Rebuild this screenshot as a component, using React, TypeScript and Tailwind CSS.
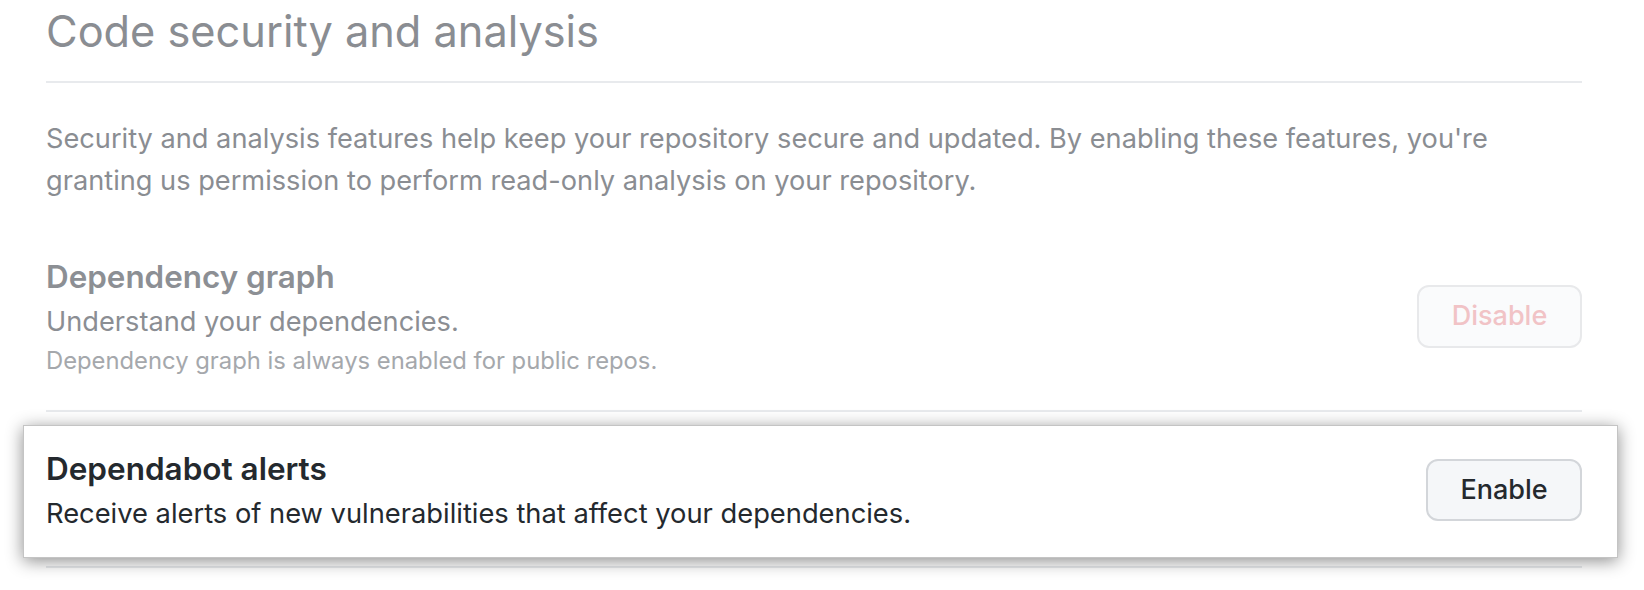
export default function App() {
  return (
    <div className="w-full h-[590px] overflow-hidden bg-white font-['Inter',sans-serif] antialiased">
      <div className="pl-[46px] pr-[62px]">
        <div className="pt-[3px] pb-[22px] border-b-2 border-[#e8eaed]">
          <h2 className="text-[43.3px] leading-[56px] font-normal text-[#8a8d92]">Code security and analysis</h2>
        </div>

        <p className="mt-[35px] text-[27.2px] leading-[42px] text-[#8a8d92]">
          Security and analysis features help keep your repository secure and updated. By enabling these features, you're
          <br />
          granting us permission to perform read-only analysis on your repository.
        </p>

        <div className="mt-[51px] pb-[31px] flex items-center justify-between border-b-2 border-[#e8eaed]">
          <div>
            <h3 className="text-[31.4px] leading-[48px] font-semibold text-[#8c8f94]">Dependency graph</h3>
            <p className="text-[27.2px] leading-[42px] text-[#8b8e93]">Understand your dependencies.</p>
            <p className="text-[23.8px] leading-[36px] text-[#a5a8ac]">Dependency graph is always enabled for public repos.</p>
          </div>
          <button className="w-[165px] h-[63px] rounded-[12px] border-2 border-[#e8e9eb] bg-[#fafbfc] text-[27px] font-medium text-[#f1c3c6]">
            Disable
          </button>
        </div>

        <div className="pt-[13px] pb-[8px] border-b-2 border-[#e8eaed]">
          <div className="-ml-[23px] -mr-[36px] pl-[22px] pr-[35px] pt-[19px] pb-[22px] bg-white border border-[#c4c4c4] shadow-[0_3px_16px_rgba(0,0,0,0.45)] flex items-center justify-between">
            <div>
              <h3 className="text-[31.5px] leading-[48px] font-semibold text-[#24292e]">Dependabot alerts</h3>
              <p className="text-[27.3px] leading-[42px] text-[#24292e]">Receive alerts of new vulnerabilities that affect your dependencies.</p>
            </div>
            <button className="w-[156px] h-[62px] rounded-[12px] border-2 border-[#d3d6da] bg-[#f5f7f9] text-[27px] font-medium text-[#24292e]">
              Enable
            </button>
          </div>
        </div>
      </div>
    </div>
  )
}
